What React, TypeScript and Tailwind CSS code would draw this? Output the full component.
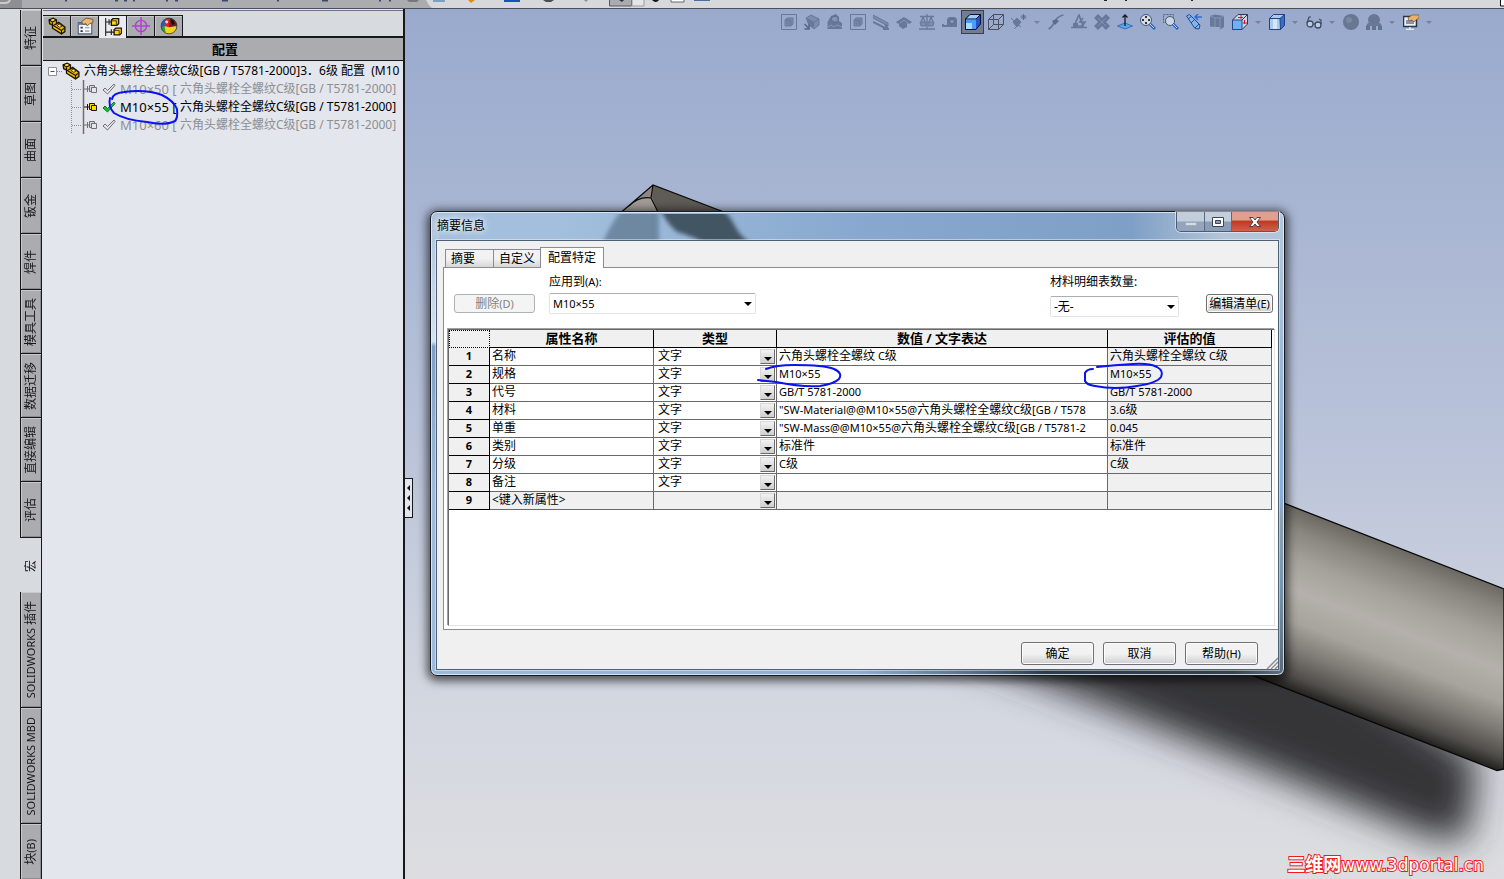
import { useState } from "react";
import type { ReactNode } from "react";

type PropertyRow = {
  name: string;
  type: string;
  value: string;
  evaluated: string;
};

const COMMAND_TABS = [
  "特征",
  "草图",
  "曲面",
  "钣金",
  "焊件",
  "模具工具",
  "数据迁移",
  "直接编辑",
  "评估",
  "宏",
  "SOLIDWORKS 插件",
  "SOLIDWORKS MBD",
  "块(B)",
];

const CONFIGS = ["M10×50", "M10×55", "M10×60"];

const ROWS: PropertyRow[] = [
  { name: "名称", type: "文字", value: "六角头螺栓全螺纹 C级", evaluated: "六角头螺栓全螺纹 C级" },
  { name: "规格", type: "文字", value: "M10×55", evaluated: "M10×55" },
  { name: "代号", type: "文字", value: "GB/T 5781-2000", evaluated: "GB/T 5781-2000" },
  { name: "材料", type: "文字", value: '"SW-Material@@M10×55@六角头螺栓全螺纹C级[GB / T578', evaluated: "3.6级" },
  { name: "单重", type: "文字", value: '"SW-Mass@@M10×55@六角头螺栓全螺纹C级[GB / T5781-2', evaluated: "0.045" },
  { name: "类别", type: "文字", value: "标准件", evaluated: "标准件" },
  { name: "分级", type: "文字", value: "C级", evaluated: "C级" },
  { name: "备注", type: "文字", value: "", evaluated: "" },
  { name: "<键入新属性>", type: "", value: "", evaluated: "" },
];

/* Latin runs are set a size smaller than the 12px Chinese text */
function Mixed({ text }: { text: string }) {
  return (
    <>
      {text.split(/([\u3000-\u9fff\uff00-\uffef]+)/).map((part, i) =>
        i % 2 === 0 && part ? (
          <span key={i} className="text-[11px]">
            {part}
          </span>
        ) : (
          part
        )
      )}
    </>
  );
}

/* ---------- icons ---------- */

function Icon({ children, size = 16 }: { children: ReactNode; size?: number }) {
  return (
    <svg width={size} height={size} viewBox="0 0 16 16" fill="none" className="shrink-0" aria-hidden="true">
      {children}
    </svg>
  );
}

function PartIcon() {
  return (
    <Icon size={18}>
      <path d="M1 2.500L4.500 1l3 1.500V6l2-1.200L15 9v4l-3 2-8-5V7L1.500 6z" fill="#eeb900" stroke="#1c1500" strokeWidth="1.200" />
      <path d="M1 2.500l3 2 3.500-2M4 4.500V7l8 5 3-2.500M12 12v3M7.500 6L5 7.500" stroke="#1c1500" />
      <path d="M2.500 2.700l2-.9 1.500.8-2 1z" fill="#ffe871" />
      <path d="M8 7.500l2-1.200L12.500 8l-2 1.200z" fill="#ffe871" stroke="#1c1500" strokeWidth=".7" />
    </Icon>
  );
}

function PropertyIcon() {
  return (
    <Icon size={18}>
      <path d="M2 5h12v10H2z" fill="#f4f6fa" stroke="#51607c" />
      <path d="M2 5h7v2H2z" fill="#5b77b0" />
      <path d="M4 9.500h2M4 12.500h2" stroke="#333" strokeWidth="1.500" />
      <path d="M8 9.500h4M8 12.500h4" stroke="#8a93a6" />
      <path d="M5 4l4-3 6 1v3l-3 1-2 2-1-2-3 .5z" fill="#e9b877" stroke="#7b5126" strokeWidth=".8" />
    </Icon>
  );
}

function ConfigIcon() {
  return (
    <Icon size={18}>
      <path d="M1.500 0v16M1 3.500h5M1 12.500h8" stroke="#222" />
      <path d="M4.500 1v5M6.500 10v5" stroke="#222" />
      <path d="M6.500 2l1.500-1.500h5V5l-1.500 1.500h-5z" fill="#ffd900" stroke="#1a1500" strokeWidth="1.200" />
      <path d="M9 10.500L10.500 9h5v4.500L14 15H9z" fill="#ffd900" stroke="#1a1500" strokeWidth="1.200" />
      <path d="M7 2.500h4V6M9.500 11h4v4" stroke="#1a1500" strokeWidth=".7" />
    </Icon>
  );
}

function DimIcon() {
  return (
    <Icon size={18}>
      <circle cx="8" cy="8" r="5" stroke="#b43fd0" strokeWidth="1.300" />
      <path d="M8 0v16M0 8h16" stroke="#b43fd0" strokeWidth="1.300" />
    </Icon>
  );
}

function AppearanceIcon() {
  return (
    <Icon size={18}>
      <circle cx="8" cy="8" r="7" fill="#2b59c9" />
      <path d="M8 1a7 7 0 0 1 7 7l-7 1z" fill="#7d1616" />
      <path d="M4.500 2A7 7 0 0 1 9 1l-1 8-4-1z" fill="#e02020" />
      <path d="M4 8l4 1 7-1a7 7 0 0 1-12 5z" fill="#f3d321" />
      <path d="M1 9l3-1 1 6a7 7 0 0 1-4-5z" fill="#2aa52e" />
      <path d="M9 2l3 1 1 3-2 1z" fill="#101010" />
      <circle cx="6" cy="4.500" r="1.300" fill="#fff" opacity=".8" />
      <circle cx="8" cy="8" r="7" stroke="#333" strokeWidth=".7" />
    </Icon>
  );
}

const GRAY = "#68789a";
const FAINT = "#7c8cae";

const TOOLS: { label: string; arrow?: boolean; active?: boolean; art: ReactNode }[] = [
  {
    label: "选择过滤器",
    art: (
      <>
        <path d="M.5.500h15v15H.5z" stroke={GRAY} />
        <path d="M4 6l2-2h6v6l-2 2H4z" fill={FAINT} stroke={GRAY} />
        <path d="M6 7h3v3H6zM4 6h6v6" stroke={GRAY} />
      </>
    ),
  },
  {
    label: "移动零部件",
    art: (
      <>
        <path d="M2 4l5-3 8 4v6l-5 4-5-4z" fill={FAINT} stroke={GRAY} />
        <path d="M3 4l7 4v6l-5-3z" fill={GRAY} />
        <path d="M10 8l5-3" stroke={GRAY} />
        <path d="M.5 10l4 4M5 10.500V15H.5" stroke="#55648a" strokeWidth="1.500" />
      </>
    ),
  },
  {
    label: "剖面",
    art: (
      <>
        <path d="M.5 8L4 2l5-2 3 3v4l3 2v6H.5z" fill={GRAY} />
        <path d="M5 3l4-1 2 2v4L7 8 4 6z" fill="#8494b6" stroke="#5d6d8e" />
        <path d="M1 13l3-2 3 2 3-2 5 2" stroke="#8797b9" />
      </>
    ),
  },
  {
    label: "实体过滤",
    art: (
      <>
        <path d="M.5.500h15v15H.5z" stroke={GRAY} />
        <path d="M4 6l2-2h6v6l-2 2H4z" fill={FAINT} stroke={GRAY} />
        <path d="M6 7h3v3H6zM4 6h6v6" stroke={GRAY} />
      </>
    ),
  },
  {
    label: "测量",
    art: (
      <>
        <path d="M0 1l15 8v3L0 4z" fill={FAINT} stroke={GRAY} />
        <path d="M0 8l14 7M10 15h5l-3-5" stroke={GRAY} strokeWidth="2" />
      </>
    ),
  },
  {
    label: "质量属性",
    art: (
      <>
        <path d="M0 8l8-5 8 5-3 2-2-1v4l-4 2-4-3V9L2 10z" fill={GRAY} />
        <path d="M4 9l4-3 4 3" stroke="#8797b9" />
      </>
    ),
  },
  {
    label: "比较",
    art: (
      <>
        <path d="M8 0v15M1 2.500h14M0 15h16M4 3L2 8M4 3l2 5M12 3l-2 5M12 3l2 5" stroke={GRAY} strokeWidth="1.300" />
        <path d="M1 8h6v4H2zM9 8h6l-1 4H9z" fill={FAINT} stroke={GRAY} />
      </>
    ),
  },
  {
    label: "卷尺",
    art: (
      <>
        <path d="M5 5l2-2h6l2 2v8H5z" fill={GRAY} />
        <path d="M0 12h8M1 10v3" stroke={GRAY} strokeWidth="2" />
        <circle cx="10" cy="7.500" r="2.500" fill="#8494b6" stroke="#586888" />
      </>
    ),
  },
  {
    label: "带边线上色",
    active: true,
    art: (
      <>
        <path d="M.5 5L5 .5h10.500V10L11 15.500H.5z" fill="#2354c8" stroke="#06103c" />
        <path d="M.5 5L5 .5h10.500L11 5z" fill="#9fcdfb" stroke="#06103c" />
        <path d="M1 5.500h10V15H1z" fill="#4e9cf6" />
        <path d="M1 9h6v6H1z" fill="#a5dcff" />
      </>
    ),
  },
  {
    label: "线架图",
    art: (
      <>
        <path d="M.5 5.500h10v10H.5zM5.500.500h10v10h-10z" stroke="#4a5061" />
        <path d="M.5 5.500l5-5M10.500 5.500l5-5M.5 15.500l5-5M10.500 15.500l5-5" stroke="#4a5061" />
      </>
    ),
  },
  {
    label: "隐藏所有类型",
    arrow: true,
    art: (
      <>
        <path d="M0 4l10 9M6 4l4 4-4 5-4-5z" fill={GRAY} stroke={GRAY} />
        <path d="M12.500 0v6M9.500 3h6M10.500 1l4 4M14.500 1l-4 4" stroke="#5d6d8e" />
        <path d="M3 15l3-3" stroke={GRAY} />
      </>
    ),
  },
  {
    label: "曲线",
    art: (
      <>
        <path d="M.5 15c3-1 4-3 6-7s4-6 9-7" stroke={GRAY} strokeWidth="1.700" />
        <path d="M4 7l4-2 3 2-4 4z" fill="#5c6c8c" />
      </>
    ),
  },
  {
    label: "重建",
    art: (
      <>
        <path d="M3 12L8 1l4 11z" stroke={GRAY} strokeWidth="1.700" />
        <path d="M0 13.500h16M12 4l-3 4h5l-4 6" stroke={GRAY} strokeWidth="1.700" />
        <path d="M2 9h5v4H2z" fill={GRAY} />
      </>
    ),
  },
  {
    label: "干涉检查",
    art: (
      <>
        <path d="M0 4l4-4 4 4 4-4 4 4-4 4 4 4-4 4-4-4-4 4-4-4 4-4z" fill={GRAY} />
        <path d="M4 4l8 8M12 4l-8 8" stroke="#8090b1" />
      </>
    ),
  },
  {
    label: "正视于",
    art: (
      <>
        <path d="M.5 12L8 9l7.500 3L8 15z" fill="#5ba5ea" stroke="#2c62ad" strokeWidth=".8" />
        <path d="M8 12V1M5.500 3.500L8 1l2.500 2.500" stroke="#141a28" strokeWidth="1.300" />
      </>
    ),
  },
  {
    label: "整屏显示全图",
    art: (
      <>
        <circle cx="6" cy="6" r="5.500" fill="#d3dde9" stroke="#4c566a" />
        <path d="M6 2v2M6 8v2M2 6h2M8 6h2" stroke="#333" strokeWidth="2" />
        <path d="M10 10l5 5" stroke="#2b63be" strokeWidth="3" />
        <path d="M10 10l4 4" stroke="#a9d4ff" />
      </>
    ),
  },
  {
    label: "局部放大",
    art: (
      <>
        <path d="M.5.500h10v8H.5z" stroke="#5b6377" strokeDasharray="2 1" />
        <circle cx="7" cy="7" r="4.500" fill="#c9d6e6" stroke="#4c566a" />
        <path d="M10 10l5 5" stroke="#2b63be" strokeWidth="3" />
        <path d="M10 10l4 4" stroke="#a9d4ff" />
      </>
    ),
  },
  {
    label: "上一视图",
    art: (
      <>
        <path d="M.5 2l3-1.500L14 11l-1 4-4-.5z" fill="#7fb6f2" stroke="#254d8f" />
        <path d="M2 5l4-3M5 9l4-4M9 14l4-4" stroke="#254d8f" />
        <path d="M16 3h-6M12 0L9 3l3 3" stroke="#2b6fd8" strokeWidth="1.500" />
      </>
    ),
  },
  {
    label: "剖面视图",
    art: (
      <>
        <path d="M1 2l5-1.500 9 1.500v11l-4 2.500V13H6L1 12.500z" fill={GRAY} />
        <path d="M6 4v9M11 4v11M1 2l5 2h5l4-2" stroke="#8494b6" />
      </>
    ),
  },
  {
    label: "视图定向",
    arrow: true,
    art: (
      <>
        <path d="M.5 6L6 .5h9.500V10L10 15.500H.5z" fill="#c7d5e6" stroke="#31394c" />
        <path d="M.5 6h9.500v9.500H.5z" fill="#6fb2f2" stroke="#22478d" />
        <path d="M10 6l5.500-5.500" stroke="#31394c" />
        <path d="M9 1v4M12.500 6v4M6 3.500h5M11 9h4" stroke="#d01c2c" />
      </>
    ),
  },
  {
    label: "显示样式",
    arrow: true,
    art: (
      <>
        <path d="M.5 4.500l4-4h11v11l-4 4H.5z" fill="#a9c9ee" stroke="#26417e" />
        <path d="M11 4.500l4.500-4v11l-4 4z" fill="#2f6fd8" stroke="#26417e" />
        <path d="M4 5h4v10H4z" fill="#d5e6f8" />
        <path d="M.5 4.500H11" stroke="#26417e" />
      </>
    ),
  },
  {
    label: "隐藏/显示项目",
    arrow: true,
    art: (
      <>
        <circle cx="4" cy="10" r="3" fill="#b7cfe9" stroke="#3f4b61" strokeWidth="1.300" />
        <circle cx="12" cy="11" r="3" fill="#b7cfe9" stroke="#3f4b61" strokeWidth="1.300" />
        <path d="M1 9l2-6h2M15 10V6l-2-1M7 10h2" stroke="#3f4b61" strokeWidth="1.200" />
      </>
    ),
  },
  {
    label: "编辑外观",
    art: (
      <>
        <circle cx="8" cy="8" r="8" fill="#687792" />
        <circle cx="6" cy="6" r="3" fill="#7988a5" />
      </>
    ),
  },
  {
    label: "应用布景",
    arrow: true,
    art: (
      <>
        <circle cx="8" cy="6" r="6" fill="#687792" />
        <path d="M0 12h4v4H0zM6 12h4v4H6zM12 12h4v4h-4z" fill="#62728f" />
        <path d="M2 9h12l2 3H0z" fill={GRAY} />
      </>
    ),
  },
  {
    label: "视图设定",
    arrow: true,
    art: (
      <>
        <path d="M.5 2.500h13v10H.5z" fill="#eef1f5" stroke="#2b3346" strokeWidth="1.500" />
        <path d="M3 6h8v4H3z" fill="#8894a8" />
        <path d="M5 4l4-3h7v3l-3 2-2 2-2-2-3 1z" fill="#e6b26d" stroke="#7b5126" strokeWidth=".7" />
        <path d="M7 13v2M3 15.500h8" stroke="#e7ecf2" strokeWidth="1.500" />
      </>
    ),
  },
];

function Triangle({ className = "fill-black" }: { className?: string }) {
  return (
    <svg width="8" height="4" viewBox="0 0 8 4" className={className} aria-hidden="true">
      <path d="M0 0h8L4 4z" />
    </svg>
  );
}

/* ---------- top strip: lower edge of the menu bar icons ---------- */

function MenuStrip() {
  return (
    <header className="h-[9px] shrink-0 border-b border-[#4c4e58] bg-[#d6d8dc] overflow-hidden">
      <svg width="100%" height="8" aria-hidden="true">
        <path d="M0 0h426q2 5 6 8H0z" fill="#abacb0" />
        <path d="M0 0h22v8H0z" fill="#8e8f92" />
        <path d="M0 3h5q4 0 5-3" stroke="#c9cacd" strokeWidth="2" fill="none" />
        <path d="M65 0h2M115 0h3M124 0h3M133 0h2M166 0h2M175 0h3M222 0h6M277 0h2M322 0h6M379 0h2M389 0h2" stroke="#3c4a6a" strokeWidth="3" />
        <path d="M407 0h12l-2 2h-8z" fill="#77787c" />
        <path d="M433 0h12v2h-12z" fill="#7da2be" />
        <path d="M468 0h7l-4 3z" fill="#e08a1a" />
        <path d="M504 0h16v2h-16z" fill="#1b4fc0" />
        <path d="M543 0h11l-3 2h-5z" fill="#4c4c4c" />
        <path d="M584 0h4l-2 2z" fill="#8d8f94" />
        <path d="M609.500-1h22v7h-22z" fill="#a9abb0" stroke="#55585f" />
        <path d="M632-1h12v7h-12z" fill="#e3e5e8" stroke="#9a9ca1" />
        <path d="M619 0h5l-2 2z" fill="#333" />
        <path d="M652 0h7q-3 4-7 0z" fill="#111" />
        <path d="M671-1h13v3h-13z" fill="#fff" stroke="#666" />
        <path d="M694 0h16v1h-16z" fill="#4a6f9e" />
        <path d="M1104 0h3M1125 0h2M1191 0h2" stroke="#223" strokeWidth="2" />
        <path d="M1500.500-1h8v7h-8z" fill="#fff" stroke="#111" />
      </svg>
    </header>
  );
}

/* ---------- left side ---------- */

function tabClass(tab: string, active: string) {
  const base = "flex shrink-0 items-center justify-center pt-2 pb-[7px] ";
  if (tab === active) return base + "min-h-[54px]";
  return (
    base +
    (tab.startsWith("SOLIDWORKS") ? "min-h-[116px] " : "min-h-[56px] ") +
    "border-b border-l border-[#16181c] bg-[#abacb0] shadow-[inset_1px_1px_0_#c8c9cc,inset_-1px_-1px_0_#8b8c90]"
  );
}

function CommandTabs() {
  const [active, setActive] = useState("宏");

  return (
    <nav className="flex w-[42px] shrink-0 flex-col overflow-hidden border-r border-[#16181c] bg-[#d7dadf] pt-px pl-5">
      {COMMAND_TABS.map((tab) => (
        <button key={tab} onClick={() => setActive(tab)} className={tabClass(tab, active)}>
          <span className="rotate-180 whitespace-nowrap text-[12px] leading-[20px] text-[#16181c] [text-orientation:sideways] [writing-mode:vertical-rl]">
            <Mixed text={tab} />
          </span>
        </button>
      ))}
    </nav>
  );
}

const PANEL_TABS = [
  { label: "FeatureManager", icon: <PartIcon /> },
  { label: "PropertyManager", icon: <PropertyIcon /> },
  { label: "ConfigurationManager", icon: <ConfigIcon /> },
  { label: "DimXpertManager", icon: <DimIcon /> },
  { label: "DisplayManager", icon: <AppearanceIcon /> },
];

function ConfigNode({ name, active }: { name: string; active: boolean }) {
  const stroke = active ? "#1c1500" : "#6d6f73";

  return (
    <li className={active ? "flex h-[18px] items-center text-black" : "flex h-[18px] items-center text-[#8d8f93]"}>
      <svg width="77" height="18" viewBox="0 0 77 18" fill="none" className="shrink-0" aria-hidden="true">
        <path d="M28.500 0v18" stroke="#8d8f93" strokeDasharray="1 1" />
        <path d="M29 9.500h10" stroke="#8d8f93" strokeDasharray="1 1" />
        <path d="M40.500 0v18" stroke="#6d6f73" strokeWidth="1.500" />
        <path d="M41 9h6M44.500 6v6" stroke={stroke} />
        <path d="M46.500 5.500h5v6h-5z" fill={active ? "#ffd900" : "#d3d5d9"} stroke={stroke} />
        <path d="M48.500 7.500h5v5h-5z" fill={active ? "#ffd900" : "#e3e6ec"} stroke={stroke} />
        <path
          d="M60 10l2-2 2.500 2.500L71 4l1 1.500-7.500 8.500z"
          fill={active ? "#19c22b" : "#e3e6ec"}
          stroke={active ? "#0a7a16" : "#6d6f73"}
        />
      </svg>
      <span className="text-[13px] whitespace-pre">{name + " [ "}</span>
      <span className="whitespace-pre">六角头螺栓全螺纹C级[GB / T5781-2000]</span>
    </li>
  );
}

function ConfigPanel() {
  return (
    <aside className="flex w-[363px] shrink-0 flex-col overflow-hidden border-r-2 border-[#16181c] bg-[#e3e6ec] pl-px">
      <div className="mt-px flex h-[28px] items-end border-t border-b-2 border-t-[#6a7090] border-b-[#16181c] bg-[#d7dadf]">
        {PANEL_TABS.map((tab, i) => (
          <button
            key={tab.label}
            aria-label={tab.label}
            className={
              i === 2
                ? "-mb-0.5 flex h-[23px] w-7 items-center justify-center border-t border-r border-[#16181c] bg-[#e9ebf0]"
                : "flex h-[21px] w-7 items-center justify-center border-t border-r border-[#16181c] bg-[#abacb0] shadow-[inset_1px_1px_0_#c8c9cc]"
            }
          >
            {tab.icon}
          </button>
        ))}
      </div>
      <h2 className="h-[23px] border-b border-[#16181c] bg-[#abacb0] pl-1 text-center text-[13px] font-bold leading-[22px]">
        配置
      </h2>
      <ul className="pt-px text-[12px] leading-[18px]">
        <li className="flex h-[18px] items-center">
          <svg width="19" height="18" viewBox="0 0 19 18" fill="none" className="shrink-0" aria-hidden="true">
            <path d="M5.500 5.500h8v8h-8z" fill="#fff" stroke="#8d8f93" />
            <path d="M7.500 9.500h4" stroke="#3050a0" />
            <path d="M14 9.500h5" stroke="#8d8f93" strokeDasharray="1 1" />
          </svg>
          <PartIcon />
          <span className="ml-1 whitespace-pre">六角头螺栓全螺纹C级[GB / T5781-2000]3．6级 配置  (M10</span>
        </li>
        {CONFIGS.map((name) => (
          <ConfigNode key={name} name={name} active={name === "M10×55"} />
        ))}
      </ul>
    </aside>
  );
}

/* ---------- graphics area ---------- */

function Scene() {
  return (
    <svg className="absolute inset-0 h-full w-full" aria-hidden="true">
      <defs>
        <linearGradient id="sky" x1="0" y1="0" x2="0" y2="1">
          <stop offset="0" stopColor="#99aacd" />
          <stop offset=".5" stopColor="#bac3d9" />
          <stop offset=".8" stopColor="#d3d7e0" />
          <stop offset="1" stopColor="#dddde1" />
        </linearGradient>
        <linearGradient id="shank" gradientUnits="userSpaceOnUse" x1="1286" y1="504" x2="1224" y2="664">
          <stop offset="0" stopColor="#6b6863" />
          <stop offset=".12" stopColor="#89867f" />
          <stop offset=".28" stopColor="#a5a29b" />
          <stop offset=".45" stopColor="#b5b0ab" />
          <stop offset=".62" stopColor="#a6a49d" />
          <stop offset=".78" stopColor="#7d7974" />
          <stop offset=".92" stopColor="#504e4a" />
          <stop offset="1" stopColor="#242320" />
        </linearGradient>
        <filter id="soft" x="-20%" y="-40%" width="140%" height="180%">
          <feGaussianBlur stdDeviation="18" />
        </filter>
      </defs>
      <rect width="100%" height="100%" fill="url(#sky)" />
      <g transform="translate(-405 -9)">
        <path d="M880 620l420 20 178 120-10 80-36-2-177-72-156-62z" fill="#353537" filter="url(#soft)" />
        <path d="M1200 470.500L1504 589v180l-7 1.500L1200 655z" fill="url(#shank)" stroke="#080808" strokeWidth="1.300" />
        <path d="M653 185l105 40H640z" fill="#5f5b57" />
        <path d="M653 185l-31 27h36l-6-15z" fill="#8d8883" />
        <path d="M622 212q18-16 28-14l8 14z" fill="#a39d98" />
        <path d="M758 225L653 185l-35 30M653 185l-2 13 7 14M651 198q-12-2-22 8" stroke="#0b0b0b" fill="none" strokeWidth="1.200" />
      </g>
    </svg>
  );
}

function ViewToolbar() {
  return (
    <div className="absolute top-px right-0 left-0 flex justify-end pr-[68px]">
      {TOOLS.map((tool) => (
        <div key={tool.label} className="flex items-center">
          <button
            aria-label={tool.label}
            className={
              tool.active
                ? "flex h-[24px] w-[23px] items-center justify-center border border-[#3a3f4c] bg-[#747d90]"
                : "flex h-[24px] w-[23px] items-center justify-center"
            }
          >
            <Icon>{tool.art}</Icon>
          </button>
          {tool.arrow && (
            <span className="flex w-[14px] justify-center">
              <svg width="6" height="3" viewBox="0 0 6 3" aria-hidden="true">
                <path d="M0 0h6L3 3z" fill="#7b8191" />
              </svg>
            </span>
          )}
        </div>
      ))}
    </div>
  );
}

/* ---------- dialog ---------- */

function ComboBox({ id, value, className }: { id: string; value: string; className: string }) {
  return (
    <div className={"relative " + className}>
      <select
        id={id}
        className="h-[21px] w-full appearance-none rounded-xs border border-[#e2e3ea] border-t-[#abadb3] bg-white pl-[3px] leading-[19px]"
      >
        <option>{value}</option>
      </select>
      <span className="pointer-events-none absolute inset-y-0 right-1 flex items-center">
        <Triangle />
      </span>
    </div>
  );
}

function PushButton({ children, className = "" }: { children: ReactNode; className?: string }) {
  return (
    <button
      className={
        "rounded-[3px] border border-[#707070] bg-linear-to-b from-[#f2f2f2] from-50% to-[#cfcfcf] text-center text-[12px] whitespace-nowrap shadow-[inset_0_0_0_1px_#fcfcfc] " +
        className
      }
    >
      {children}
    </button>
  );
}

function PropertyTable() {
  const headCell = "h-[18px] border-r border-b border-black bg-[#f0f0f0] p-0 text-[13px] leading-[17px] font-bold";
  const cell =
    "h-[18px] overflow-hidden border-r border-b border-[#696969] p-0 pl-[2px] align-top leading-[16px] whitespace-pre";

  return (
    <table className="w-full table-fixed border-separate border-spacing-0 text-left text-[12px]">
      <colgroup>
        <col className="w-[41px]" />
        <col className="w-[164px]" />
        <col className="w-[123px]" />
        <col className="w-[331px]" />
        <col />
      </colgroup>
      <thead>
        <tr className="text-center">
          <th className="h-[18px] border border-dotted border-black bg-[#f0f0f0] p-0" />
          <th className={headCell}>属性名称</th>
          <th className={headCell}>类型</th>
          <th className={headCell}>数值 / 文字表达</th>
          <th className={headCell}>评估的值</th>
        </tr>
      </thead>
      <tbody>
        {ROWS.map((row, i) => {
          const isNew = i === ROWS.length - 1;
          const bg = isNew ? " bg-[#f0f0f0]" : " bg-white";
          return (
            <tr key={row.name}>
              <th className="h-[18px] border-r border-b border-black bg-[#f0f0f0] p-0 text-center align-top text-[11px] leading-[16px] font-bold">
                {i + 1}
              </th>
              <td className={cell + bg}>{row.name}</td>
              <td className={cell + bg}>
                <div className="relative">
                  <select
                    aria-label={"类型 " + (i + 1)}
                    className="block h-4 w-full appearance-none bg-transparent pl-[2px] leading-[16px]"
                  >
                    <option>{row.type}</option>
                  </select>
                  <span className="pointer-events-none absolute top-px right-px flex h-[15px] w-[15px] items-center justify-center border border-[#d8d8d8] border-r-[#696969] border-b-[#696969] bg-linear-to-b from-[#f2f2f2] to-[#cfcfcf] pt-1">
                    <Triangle />
                  </span>
                </div>
              </td>
              <td className={cell + bg}>
                <Mixed text={row.value} />
              </td>
              <td className={cell + " bg-[#f0f0f0]"}>
                <Mixed text={row.evaluated} />
              </td>
            </tr>
          );
        })}
      </tbody>
    </table>
  );
}

function WindowButtons() {
  return (
    <div className="flex h-[20px] overflow-hidden rounded-b-[5px] border border-t-0 border-[#4d5a70] shadow-[0_0_0_1px_#ffffff80]">
      <button
        aria-label="最小化"
        className="flex w-[28px] items-center justify-center border-r border-[#5d6a80] bg-linear-to-b from-[#c3cedd] from-45% to-[#92a5bd] to-55% pt-1"
      >
        <span className="h-1 w-3 border border-[#a0abb9] bg-[#d5dbe3]" />
      </button>
      <button
        aria-label="最大化"
        className="flex w-[27px] items-center justify-center border-r border-[#5d6a80] bg-linear-to-b from-[#c3cedd] from-45% to-[#8a9db7] to-55%"
      >
        <svg width="12" height="10" viewBox="0 0 12 10" aria-hidden="true">
          <path d="M.5.500h11v9H.5z" fill="#fff" stroke="#3b4557" />
          <path d="M3.500 3.500h5v3h-5z" fill="#8a9db7" stroke="#3b4557" />
        </svg>
      </button>
      <button
        aria-label="关闭"
        className="flex w-[46px] items-center justify-center bg-linear-to-b from-[#e0a090] from-40% via-[#bf3a22] via-50% to-[#d0604a]"
      >
        <svg width="12" height="10" viewBox="0 0 12 10" aria-hidden="true">
          <path
            d="M.5.500h3.500L6 3 8 .5h3.500L8 5l3.500 4.500H8L6 7 4 9.500H.5L4 5z"
            fill="#fff"
            stroke="#44303a"
            strokeWidth=".9"
          />
        </svg>
      </button>
    </div>
  );
}

const TAB_WIDTHS: Record<string, string> = {
  摘要: "w-12",
  自定义: "w-[47px]",
  配置特定: "w-16",
};

function SummaryDialog() {
  const [tab, setTab] = useState("配置特定");

  return (
    <section
      role="dialog"
      aria-label="摘要信息"
      className="absolute top-[202px] left-[25px] flex h-[465px] w-[855px] flex-col rounded-[7px] border border-[#14181f] px-[5px] pb-[5px] shadow-[inset_0_0_0_1px_#e8f0f8cc,0_2px_10px_3px_#000000a0] [background:linear-gradient(90deg,#9cbad9,#8fafd0_50%,#4d6278_66%,#2d3c4c_72%,#34424f_94%,#5f7080)_bottom/100%_8px_no-repeat,linear-gradient(180deg,#b8c8da,#8eb1d8_50%,#88b0dc_62%,#8ea2b2_66%,#7898b0_80%,#5a6a7a)_right/8px_100%_no-repeat,linear-gradient(180deg,#a9c0da,#d5e2ef_28%,#7d9fc6_29%,#9cbad9_60%)_left/8px_100%_no-repeat,linear-gradient(90deg,#a4bfdc,#a3bfdd_15%,#88a8cf_50%,#7e9fc6_82%,#b4c5d9_93%)]"
    >
      <svg className="absolute top-[2px] left-[160px]" width="170" height="27" aria-hidden="true">
        <defs>
          <filter id="glass">
            <feGaussianBlur stdDeviation="2" />
          </filter>
        </defs>
        <path d="M10 32Q20 8 34-8h34v40z" fill="#5f7890" opacity=".75" filter="url(#glass)" />
        <path d="M68-8h60q10 8 16 20 6 12 20 20h-46q-16-10-32-14Q74 8 68-8z" fill="#435464" filter="url(#glass)" />
      </svg>
      <div className="relative flex h-[28px] shrink-0 items-start justify-between">
        <h1 className="pl-px text-[12px] leading-[27px] [text-shadow:0_0_6px_#fff,0_0_8px_#fff]">摘要信息</h1>
        <WindowButtons />
      </div>
      <div className="relative flex flex-1 flex-col border border-[#4f5f78] bg-[#f0f0f0] pt-[6px] shadow-[0_0_0_1px_#ffffff70]">
        <div role="tablist" className="relative flex items-end pl-2 text-[12px]">
          {["摘要", "自定义", "配置特定"].map((name) => (
            <button
              key={name}
              role="tab"
              aria-selected={tab === name}
              onClick={() => setTab(name)}
              className={
                (tab === name
                  ? "-mb-px h-[21px] border border-b-0 border-[#898c95] bg-white text-center leading-[18px] "
                  : "h-[18px] border border-r-0 border-b-0 border-[#898c95] bg-linear-to-b from-[#f2f2f2] from-50% to-[#d6d6d6] pl-[5px] text-left leading-[18px] ") +
                TAB_WIDTHS[name]
              }
            >
              {name}
            </button>
          ))}
        </div>
        <div className="ml-[6px] flex flex-1 flex-col border border-r-0 border-[#898c95] bg-white pt-1 pr-[3px] pb-[3px] pl-1">
          <div className="flex items-start pr-0.5 pl-[6px] text-[12px] leading-[20px]">
            <button
              disabled
              className="mt-[22px] h-[19px] w-[81px] rounded-[3px] border border-[#adb2b5] bg-[#f4f4f4] leading-[17px] text-[#838383]"
            >
              <Mixed text="删除(D)" />
            </button>
            <div className="ml-[14px] flex flex-col gap-px">
              <label htmlFor="apply-to">
                <Mixed text="应用到(A):" />
              </label>
              <ComboBox id="apply-to" value="M10×55" className="w-[207px] text-[11px]" />
            </div>
            <div className="ml-auto flex flex-col gap-1">
              <label htmlFor="bom-qty">材料明细表数量:</label>
              <ComboBox id="bom-qty" value="-无-" className="w-[129px]" />
            </div>
            <PushButton className="mt-[22px] ml-[27px] h-[19px] w-[67px] leading-[17px]">
              <Mixed text="编辑清单(E)" />
            </PushButton>
          </div>
          <div className="mt-3 flex-1 border border-[#e3e3e3] border-t-[#696969] border-l-[#696969] bg-white pr-[2px] shadow-[-1px_-1px_0_#a0a0a0]">
            <PropertyTable />
          </div>
        </div>
        <footer className="flex h-[39px] shrink-0 items-start justify-end gap-[9px] pt-3 pr-5">
          <PushButton className="h-[23px] w-[73px] leading-[21px]">确定</PushButton>
          <PushButton className="h-[23px] w-[73px] leading-[21px]">取消</PushButton>
          <PushButton className="h-[23px] w-[73px] leading-[21px]">
            <Mixed text="帮助(H)" />
          </PushButton>
        </footer>
        <svg className="absolute right-0 bottom-0" width="12" height="12" aria-hidden="true">
          <path d="M1 12L12 1M5 12l7-7M9 12l3-3" stroke="#8b8b8b" strokeWidth="1.300" />
        </svg>
      </div>
    </section>
  );
}

/* hand drawn circles over the values */
function PenMarks() {
  return (
    <svg className="pointer-events-none absolute inset-0 h-full w-full" fill="none" aria-hidden="true">
      <g stroke="#0b12f0" strokeWidth="2" strokeLinecap="round" strokeLinejoin="round">
        <path d="M112 99q1-6 12-7 22-3 38 3 12 6 15 14 1 9-2 12-10 5-28 1-22-2-33-9-6-6-4-15" />
        <path d="M766 369q10-4 28-4 30 0 40 4 9 4 5 10-5 5-19 7-20 1-44-4l-18-2" />
        <path d="M1093 369q-6 0-8 4v8q2 4 10 5 20 4 42 0 20-3 24-9 3-6-4-10-8-4-24-3-18 1-36 3" />
      </g>
    </svg>
  );
}

export default function App() {
  return (
    <div className="relative flex h-screen flex-col overflow-hidden bg-[#d7dadf] font-['Noto_Sans','Noto_Sans_CJK_SC',sans-serif] text-black">
      <MenuStrip />
      <div className="flex min-h-0 flex-1">
        <CommandTabs />
        <ConfigPanel />
        <main className="relative flex-1 overflow-hidden">
          <Scene />
          <ViewToolbar />
          <SummaryDialog />
          <p className="absolute right-5 bottom-1 flex items-center [font-family:'DejaVu_Sans','Noto_Sans_CJK_SC',sans-serif] text-[17px] leading-[20px] text-white [-webkit-text-stroke:2px_#ee1c1c] [paint-order:stroke_fill]">
            <span className="text-[18px] font-bold">三维网</span>
            www.3dportal.cn
          </p>
          <button
            aria-label="折叠面板"
            className="absolute top-[469px] left-0 flex h-10 w-2 flex-col items-center justify-around border border-l-0 border-[#16181c] bg-[#e3e6ec] py-1"
          >
            {[0, 1, 2].map((i) => (
              <svg key={i} width="3" height="6" viewBox="0 0 3 6" aria-hidden="true">
                <path d="M3 0v6L0 3z" fill="#111" />
              </svg>
            ))}
          </button>
        </main>
      </div>
      <PenMarks />
    </div>
  );
}
